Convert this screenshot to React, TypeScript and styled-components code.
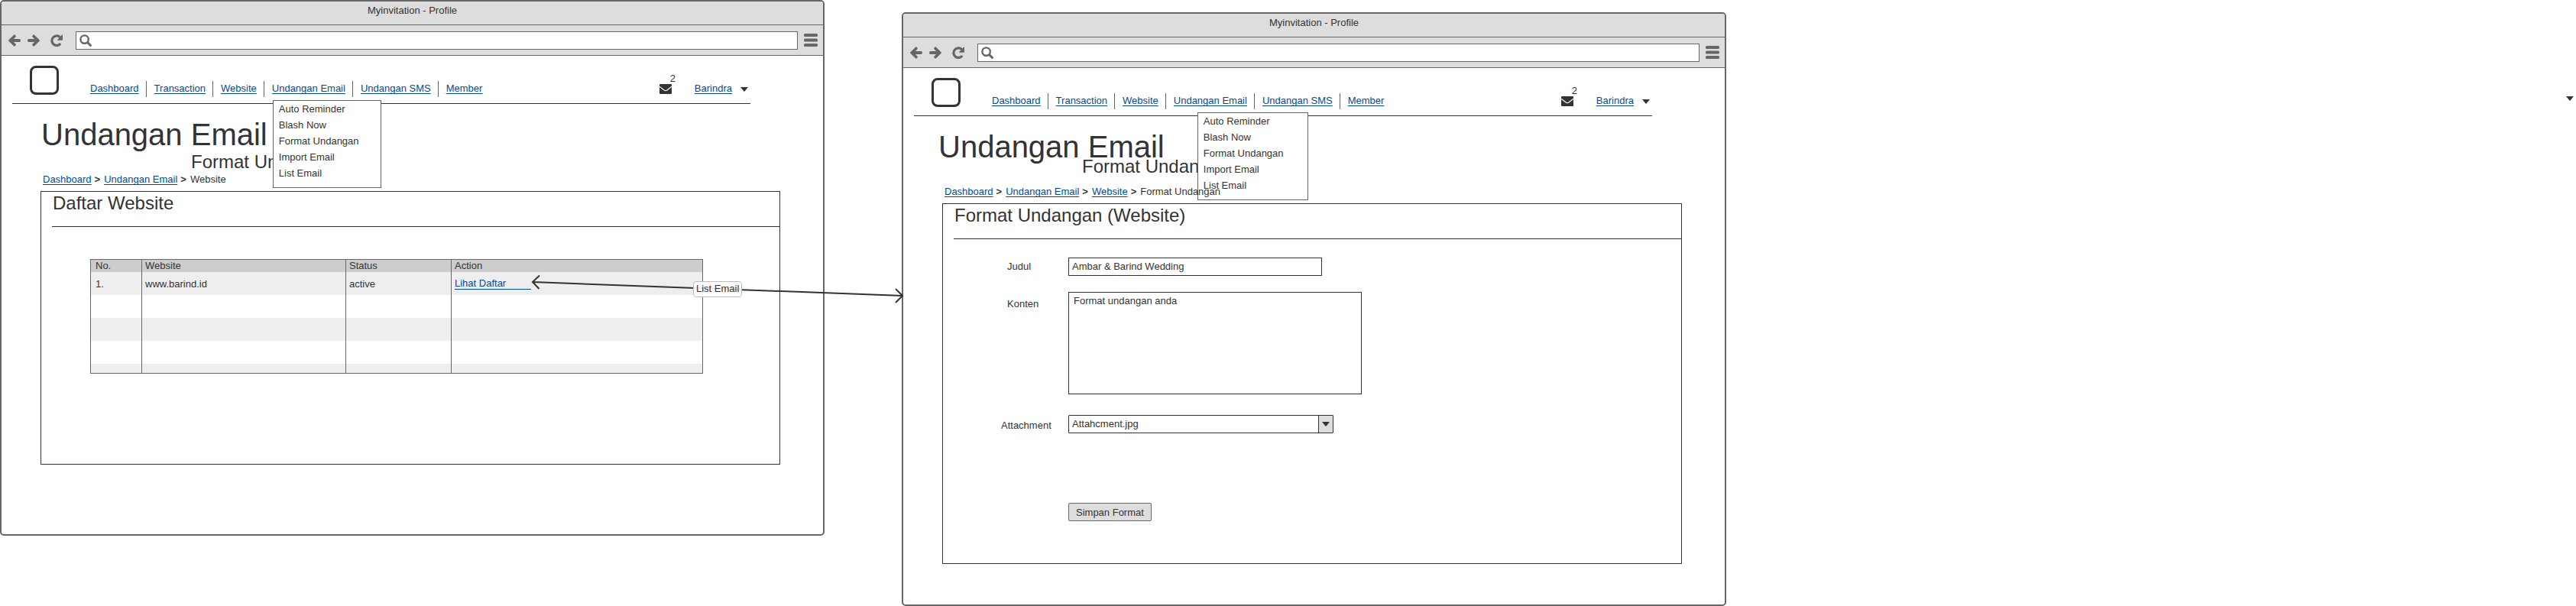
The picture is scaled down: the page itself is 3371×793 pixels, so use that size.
import React from 'react';
import styled, { createGlobalStyle } from 'styled-components';

const ink = '#333333';
const line = '#666666';
const chrome = '#dddddd';
const link = '#004b99';

const GlobalStyle = createGlobalStyle`
  *, *::before, *::after { box-sizing: border-box; }
  body {
    margin: 0;
    background: #ffffff;
    color: ${ink};
    font: 13px/15px "Liberation Sans", Arial, sans-serif;
  }
  h1, h2, p, ul, ol { margin: 0; padding: 0; font-weight: 400; }
  ul, ol { list-style: none; }
  button, input, textarea, select { font: inherit; color: inherit; margin: 0; }
  svg { display: block; }
`;

const Board = styled.main`
  display: grid;
  grid-template-columns: 1079fr 1079fr 1011fr;
  column-gap: 101px;
  align-items: start;
`;

const Window = styled.section<{ $drop?: number; $foot: number }>`
  margin-top: ${(p) => p.$drop ?? 0}px;
  padding-bottom: ${(p) => p.$foot}px;
  border: 2px solid ${line};
  border-radius: 5px;
`;

const TitleBar = styled.div`
  height: 31px;
  padding-top: 4px;
  border-bottom: 1px solid ${line};
  border-radius: 3px 3px 0 0;
  background: ${chrome};
  text-align: center;
`;

const ToolBar = styled.div`
  display: flex;
  align-items: center;
  height: 40px;
  padding: 0 7px 0 9px;
  border-bottom: 1px solid ${line};
  background: ${chrome};
  color: ${line};
`;

const IconButton = styled.button<{ $gap?: number }>`
  display: flex;
  margin-right: ${(p) => p.$gap ?? 0}px;
  padding: 0;
  border: 0;
  background: none;
  color: inherit;
`;

const AddressBox = styled.label`
  flex: 1;
  display: flex;
  align-items: center;
  height: 24px;
  margin-right: 8px;
  padding-left: 4px;
  border: 1px solid ${line};
  background: #ffffff;
`;

const AddressInput = styled.input`
  flex: 1;
  min-width: 0;
  padding: 0 4px;
  border: 0;
  outline: 0;
  background: none;
`;

const Header = styled.header`
  display: flex;
  align-items: flex-end;
  height: 63px;
  margin: 0 95px 0 14px;
  padding: 0 3px 8px 23px;
  border-bottom: 1px solid ${ink};
`;

const Logo = styled.div`
  width: 38px;
  height: 38px;
  margin: 0 31px 3px 0;
  border: 3px solid ${ink};
  border-radius: 8px;
`;

const NavList = styled.ul`
  display: flex;
  flex: 1;
`;

const NavItem = styled.li`
  position: relative;
  height: 21px;
  padding: 0 9px 0 10px;
  line-height: 19px;
  white-space: nowrap;
  & + & { border-left: 1px solid ${line}; }
`;

const Link = styled.a`
  color: ${link};
  text-decoration: underline;
  text-decoration-thickness: 1px;
  text-underline-offset: 2px;
  text-decoration-skip-ink: none;
`;

const Menu = styled.ul<{ $left: number; $width: number }>`
  position: absolute;
  z-index: 1;
  top: 25px;
  left: ${(p) => p.$left}px;
  width: ${(p) => p.$width}px;
  padding: 0 7px 8px;
  border: 1px solid ${line};
  background: #ffffff;
  line-height: 21px;
`;

const Account = styled.div`
  display: flex;
  align-items: center;
  height: 21px;
  line-height: 19px;
`;

const Mail = styled.button`
  position: relative;
  display: flex;
  margin-right: 30px;
  padding: 0;
  border: 0;
  background: none;
`;

const Badge = styled.span`
  position: absolute;
  left: 14px;
  bottom: 11px;
`;

const UserLink = styled(Link)`
  margin-right: 11px;
  padding-bottom: 2px;
`;

const PageHead = styled.div<{ $indent: number }>`
  min-height: 89px;
  padding: 16px 0 0 ${(p) => p.$indent}px;
`;

const PageTitle = styled.h1`
  font-size: 40px;
  line-height: 48px;
`;

const SubTitle = styled.p<{ $indent: number; $lift?: number }>`
  margin: ${(p) => -(p.$lift ?? 0)}px 0 0 ${(p) => p.$indent}px;
  font-size: 24px;
  line-height: 24px;
`;

const Crumbs = styled.ol`
  position: relative;
  z-index: 2;
  display: flex;
  width: max-content;
  margin: 0 0 6px 54px;
  line-height: 19px;
  li + li::before {
    content: ">";
    margin: 0 5px 0 4px;
    font-weight: 700;
  }
`;

const Panel = styled.div<{ $height: number }>`
  min-height: ${(p) => p.$height}px;
  margin: 0 56px 0 51px;
  border: 1px solid ${ink};
`;

const PanelTitle = styled.h2`
  height: 46px;
  margin-left: 14px;
  padding: 1px 0 0 1px;
  border-bottom: 1px solid ${ink};
  font-size: 24px;
  line-height: 28px;
`;

const TableArea = styled.div`
  padding: 42px 100px 0 64px;
`;

const Table = styled.table`
  width: 100%;
  table-layout: fixed;
  border: 1px solid ${line};
  border-collapse: separate;
  border-spacing: 0;
  text-align: left;
  th, td { padding: 0 0 0 4px; font-weight: 400; }
  th { height: 16px; line-height: 16px; background: #cccccc; }
  td { height: 30px; }
  th:first-child, td:first-child { padding-left: 6px; }
  th + th, td + td { border-left: 1px solid ${line}; }
  tbody tr:nth-child(odd) { background: #eeeeee; }
  tbody tr:last-child td { height: 12px; }
`;

const Col = styled.col<{ $share?: string }>`
  width: ${(p) => p.$share ?? 'auto'};
`;

const ActionAnchor = styled.div`
  position: relative;
  width: 100px;
`;

const ActionLink = styled.a`
  display: block;
  border-bottom: 1px solid ${link};
  color: ${link};
  line-height: 14px;
  text-decoration: none;
`;

const Connector = styled.div`
  position: absolute;
  z-index: 3;
  left: 100%;
  top: -6px;
  width: 488px;
  color: ${ink};
  pointer-events: none;
`;

const ConnectorLabel = styled.span`
  position: absolute;
  left: 212px;
  top: 10px;
  padding: 1px 3px 2px;
  border: 1px solid #bbbbbb;
  border-radius: 4px;
  background: rgba(255, 255, 255, 0.9);
  line-height: 16px;
  white-space: nowrap;
`;

const Form = styled.form`
  display: grid;
  grid-template-columns: 88px minmax(0, 1fr);
  padding: 24px 20px 20px 76px;
`;

const Label = styled.label<{ $line: number; $indent?: number }>`
  padding-left: ${(p) => p.$indent ?? 0}px;
  line-height: ${(p) => p.$line}px;
`;

const TextBox = styled.input`
  width: 100%;
  max-width: 332px;
  height: 24px;
  margin-bottom: 21px;
  padding: 0 4px 1px;
  border: 1px solid ${ink};
  border-radius: 0;
`;

const TextArea = styled.textarea`
  display: block;
  width: 100%;
  max-width: 384px;
  height: 134px;
  margin-bottom: 27px;
  padding: 3px 6px;
  border: 1px solid ${ink};
  border-radius: 0;
  resize: none;
`;

const SelectBox = styled.div`
  position: relative;
  width: 100%;
  max-width: 347px;
  margin-bottom: 91px;
`;

const Select = styled.select`
  display: block;
  appearance: none;
  width: 100%;
  height: 24px;
  padding: 0 24px 1px 4px;
  border: 1px solid ${ink};
  border-radius: 1px;
  background: #ffffff;
`;

const SelectArrow = styled.span`
  position: absolute;
  top: 1px;
  right: 1px;
  bottom: 1px;
  display: grid;
  place-items: center;
  width: 19px;
  border-left: 1px solid ${ink};
  background: ${chrome};
  pointer-events: none;
`;

const Button = styled.button`
  grid-column: 2;
  justify-self: start;
  height: 24px;
  padding: 0 9px;
  border: 1px solid ${line};
  border-radius: 2px;
  background: ${chrome};
`;

const StrayCaret = styled.div`
  display: flex;
  justify-content: flex-end;
  padding: 126px 3px 0 0;
`;

const Caret = () => (
  <svg width="10" height="6" viewBox="0 0 10 6" fill={ink} aria-hidden="true">
    <path d="M0.6 0h8.8q.6 0 .2.6L5.5 5.4q-.5.5-1 0L.4.6Q0 0 .6 0z" />
  </svg>
);

const ArrowIcon = ({ flip }: { flip?: boolean }) => (
  <svg width="16" height="16" viewBox="0 0 16 16" fill="currentColor" aria-hidden="true">
    <g transform={flip ? 'matrix(-1 0 0 1 16 0)' : undefined}>
      <path d="M.4 7.300L7 .7q.8-.7 1.600 0l.9.9q.7.8 0 1.600L6.900 5.900H14.200q1.800 0 1.800 2.100t-1.800 2.100H6.900l2.600 2.700q.7.8 0 1.600l-.9.9q-.8.7-1.600 0L.4 8.700Q-.2 8 .4 7.300z" />
    </g>
  </svg>
);

const ReloadIcon = () => (
  <svg width="16" height="16" viewBox="0 0 16 16" aria-hidden="true">
    <path d="M13.200 12A6.300 6.300 0 1 1 12.600 3.700" fill="none" stroke="currentColor" strokeWidth="3.2" />
    <path d="M16 1.200v5.900q0 .6-.6.6H9.500q-1 0-.4-.8L15 .8q1-.6 1 .4z" fill="currentColor" />
  </svg>
);

const SearchIcon = () => (
  <svg width="16" height="16" viewBox="0 0 16 16" fill="none" stroke={line} aria-hidden="true">
    <circle cx="6.6" cy="6.6" r="5.2" strokeWidth="2.4" />
    <path d="M10.800 10.800l3.600 3.600" strokeWidth="3" strokeLinecap="round" />
  </svg>
);

const BarsIcon = () => (
  <svg width="18" height="17" viewBox="0 0 18 17" fill="currentColor" aria-hidden="true">
    <rect width="18" height="4" rx="1.6" />
    <rect y="6.5" width="18" height="4" rx="1.6" />
    <rect y="13" width="18" height="4" rx="1.6" />
  </svg>
);

const MailIcon = () => (
  <svg width="16" height="13" viewBox="0 0 16 13" aria-hidden="true">
    <rect width="16" height="13" rx="1" fill={ink} />
    <path d="M0 3.200L6.200 8q1.800 1.300 3.600 0L16 3.200" fill="none" stroke="#ffffff" strokeWidth="1.1" />
  </svg>
);

const BrowserChrome = () => (
  <>
    <TitleBar>Myinvitation - Profile</TitleBar>
    <ToolBar>
      <IconButton type="button" aria-label="Back" $gap={9}><ArrowIcon /></IconButton>
      <IconButton type="button" aria-label="Forward" $gap={14}><ArrowIcon flip /></IconButton>
      <IconButton type="button" aria-label="Reload" $gap={17}><ReloadIcon /></IconButton>
      <AddressBox>
        <SearchIcon />
        <AddressInput type="text" aria-label="Address" />
      </AddressBox>
      <IconButton type="button" aria-label="Menu"><BarsIcon /></IconButton>
    </ToolBar>
  </>
);

const navItems = ['Dashboard', 'Transaction', 'Website', 'Undangan Email', 'Undangan SMS', 'Member'];
const menuItems = ['Auto Reminder', 'Blash Now', 'Format Undangan', 'Import Email', 'List Email'];

const SiteHeader = ({ menuLeft, menuWidth }: { menuLeft: number; menuWidth: number }) => (
  <Header>
    <Logo />
    <NavList>
      {navItems.map((item) => (
        <NavItem key={item}>
          <Link href="#">{item}</Link>
          {item === 'Undangan Email' && (
            <Menu $left={menuLeft} $width={menuWidth}>
              {menuItems.map((entry) => <li key={entry}>{entry}</li>)}
            </Menu>
          )}
        </NavItem>
      ))}
    </NavList>
    <Account>
      <Mail type="button" aria-label="Messages">
        <MailIcon />
        <Badge>2</Badge>
      </Mail>
      <UserLink href="#">Barindra</UserLink>
      <Caret />
    </Account>
  </Header>
);

const Breadcrumbs = ({ links, current }: { links: string[]; current: string }) => (
  <Crumbs>
    {links.map((item) => <li key={item}><Link href="#">{item}</Link></li>)}
    <li>{current}</li>
  </Crumbs>
);

const ListConnector = () => (
  <Connector>
    <svg width="488" height="44" viewBox="0 0 488 44" fill="none" stroke="currentColor" strokeWidth="2" aria-hidden="true">
      <path d="M2 11L486 29M11 2.500L2 11l8.500 9M477 20l9 9-9 9" />
    </svg>
    <ConnectorLabel>List Email</ConnectorLabel>
  </Connector>
);

const WebsiteTable = () => (
  <TableArea>
    <Table>
      <colgroup>
        <Col $share="8.25%" />
        <Col $share="33.375%" />
        <Col $share="17.25%" />
        <Col />
      </colgroup>
      <thead>
        <tr><th>No.</th><th>Website</th><th>Status</th><th>Action</th></tr>
      </thead>
      <tbody>
        <tr>
          <td>1.</td>
          <td>www.barind.id</td>
          <td>active</td>
          <td>
            <ActionAnchor>
              <ActionLink href="#">Lihat Daftar</ActionLink>
              <ListConnector />
            </ActionAnchor>
          </td>
        </tr>
        {[2, 3, 4, 5].map((row) => (
          <tr key={row}><td /><td /><td /><td /></tr>
        ))}
      </tbody>
    </Table>
  </TableArea>
);

const FormatForm = () => (
  <Form>
    <Label htmlFor="judul" $line={24} $indent={8}>Judul</Label>
    <TextBox id="judul" type="text" defaultValue="Ambar &amp; Barind Wedding" />
    <Label htmlFor="konten" $line={32} $indent={8}>Konten</Label>
    <TextArea id="konten" defaultValue="Format undangan anda" />
    <Label htmlFor="attachment" $line={28}>Attachment</Label>
    <SelectBox>
      <Select id="attachment"><option>Attahcment.jpg</option></Select>
      <SelectArrow><Caret /></SelectArrow>
    </SelectBox>
    <Button type="button">Simpan Format</Button>
  </Form>
);

export default function App() {
  return (
    <>
      <GlobalStyle />
      <Board>
        <Window $foot={91}>
          <BrowserChrome />
          <SiteHeader menuLeft={11} menuWidth={142} />
          <PageHead $indent={52}>
            <PageTitle>Undangan Email</PageTitle>
            <SubTitle $indent={196}>Format Undangan</SubTitle>
          </PageHead>
          <Breadcrumbs links={['Dashboard', 'Undangan Email']} current="Website" />
          <Panel $height={358}>
            <PanelTitle>Daftar Website</PanelTitle>
            <WebsiteTable />
          </Panel>
        </Window>

        <Window $drop={16} $foot={53}>
          <BrowserChrome />
          <SiteHeader menuLeft={41} menuWidth={145} />
          <PageHead $indent={46}>
            <PageTitle>Undangan Email</PageTitle>
            <SubTitle $indent={188} $lift={10}>Format Undangan</SubTitle>
          </PageHead>
          <Breadcrumbs links={['Dashboard', 'Undangan Email', 'Website']} current="Format Undangan" />
          <Panel $height={472}>
            <PanelTitle>Format Undangan (Website)</PanelTitle>
            <FormatForm />
          </Panel>
        </Window>

        <StrayCaret>
          <IconButton type="button" aria-label="Open list"><Caret /></IconButton>
        </StrayCaret>
      </Board>
    </>
  );
}
